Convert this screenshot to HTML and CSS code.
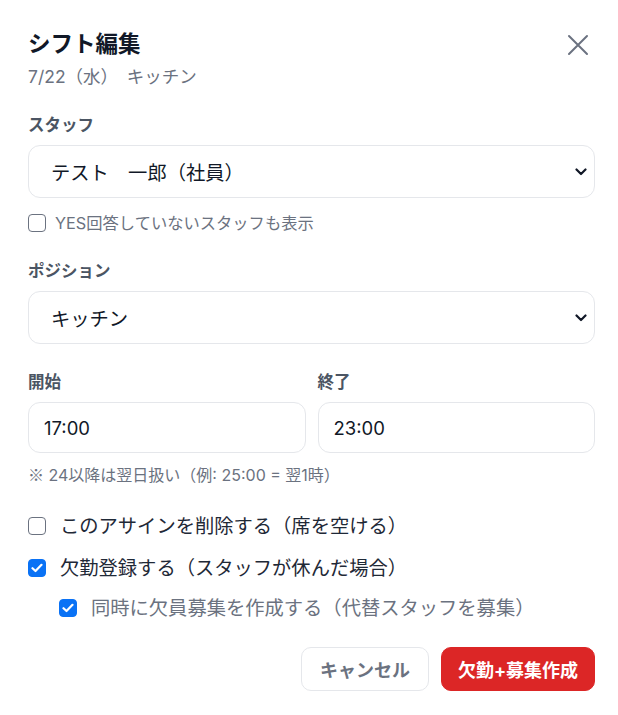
FILE: index.html
```html
<!DOCTYPE html>
<html lang="ja">
<head>
<meta charset="utf-8">
<title>シフト編集</title>
<link rel="stylesheet" href="styles.css">
</head>
<body>
<div class="modal">
  <div class="header">
    <div class="titles">
      <h1 class="title">シフト編集</h1>
      <div class="subtitle">7/22（水）　キッチン</div>
    </div>
    <button class="close" aria-label="閉じる">
      <svg width="22" height="22" viewBox="0 0 22 22"><path d="M2 2 L20 20 M20 2 L2 20" stroke="#6b7280" stroke-width="2" stroke-linecap="round" fill="none"/></svg>
    </button>
  </div>

  <div class="field first">
    <div class="label">スタッフ</div>
    <div class="select">
      <span>テスト　一郎（社員）</span>
      <svg class="chev" width="12" height="8" viewBox="0 0 12 8"><path d="M1.5 1.5 L6 6 L10.5 1.5" stroke="#111827" stroke-width="2.2" fill="none" stroke-linecap="round" stroke-linejoin="round"/></svg>
    </div>
    <label class="check small"><span class="box"></span><span>YES回答していないスタッフも表示</span></label>
  </div>

  <div class="field">
    <div class="label">ポジション</div>
    <div class="select">
      <span>キッチン</span>
      <svg class="chev" width="12" height="8" viewBox="0 0 12 8"><path d="M1.5 1.5 L6 6 L10.5 1.5" stroke="#111827" stroke-width="2.2" fill="none" stroke-linecap="round" stroke-linejoin="round"/></svg>
    </div>
  </div>

  <div class="times">
    <div class="time">
      <div class="label">開始</div>
      <div class="input">17:00</div>
    </div>
    <div class="time">
      <div class="label">終了</div>
      <div class="input">23:00</div>
    </div>
  </div>
  <div class="note"><span class="cjk">※</span> 24以降は翌日扱い（例: 25:00 = 翌1時）</div>

  <div class="options">
    <label class="check"><span class="box"></span><span>このアサインを削除する（席を空ける）</span></label>
    <label class="check"><span class="box on"><svg width="12" height="10" viewBox="0 0 12 10"><path d="M1.5 5.2 L4.5 8 L10.5 1.8" stroke="#fff" stroke-width="2.2" fill="none" stroke-linecap="round" stroke-linejoin="round"/></svg></span><span>欠勤登録する（スタッフが休んだ場合）</span></label>
    <label class="check sub"><span class="box on"><svg width="12" height="10" viewBox="0 0 12 10"><path d="M1.5 5.2 L4.5 8 L10.5 1.8" stroke="#fff" stroke-width="2.2" fill="none" stroke-linecap="round" stroke-linejoin="round"/></svg></span><span>同時に欠員募集を作成する（代替スタッフを募集）</span></label>
  </div>

  <div class="actions">
    <button class="btn cancel">キャンセル</button>
    <button class="btn primary">欠勤+募集作成</button>
  </div>
</div>
</body>
</html>
```

FILE: styles.css
```css
* { box-sizing: border-box; }
html, body { margin: 0; background: #fff; }
body {
  font-family: Inter, "Noto Sans CJK JP", sans-serif;
  color: #111827;
}
.cjk { font-family: "Noto Sans CJK JP", sans-serif; }
.modal {
  padding: 29px 23px 24px 28px;
}
.header {
  display: flex;
  justify-content: space-between;
  align-items: flex-start;
}
.title {
  margin: 0;
  font-size: 22.5px;
  line-height: 30px;
  font-weight: 700;
  color: #111827;
}
.subtitle {
  margin-top: 6px;
  font-size: 17.5px;
  line-height: 24px;
  color: #6b7280;
}
.close {
  border: 0;
  background: none;
  padding: 0;
  margin-top: 5px;
  margin-right: 6px;
  width: 22px;
  height: 22px;
  display: flex;
}
.field { margin-top: 25px; }
.label {
  font-size: 16.5px;
  line-height: 22px;
  font-weight: 700;
  color: #4b5563;
  margin-bottom: 9px;
}
.select, .input {
  border: 1px solid #e5e7eb;
  border-radius: 12px;
  display: flex;
  align-items: center;
  font-size: 19.3px;
  color: #111827;
}
.select {
  height: 53px;
  padding: 0 7px 0 22px;
  justify-content: space-between;
}
.input {
  height: 51px;
  padding: 0 15px;
  font-size: 18.5px;
}
.check {
  display: flex;
  align-items: center;
  gap: 14px;
  font-size: 19.3px;
  line-height: 26px;
  color: #1f2937;
}
.check .box {
  width: 18px;
  height: 18px;
  border: 1.5px solid #6b7280;
  border-radius: 4px;
  display: flex;
  align-items: center;
  justify-content: center;
  flex: none;
}
.check .box.on {
  background: #0a72f5;
  border-color: #0a72f5;
}
.check.small {
  margin-top: 13px;
  font-size: 16.3px;
  line-height: 24px;
  gap: 9px;
  color: #6b7280;
}
.times {
  margin-top: 27px;
  display: grid;
  grid-template-columns: 1fr 1fr;
  gap: 12px;
}
.note {
  margin-top: 10px;
  font-size: 16px;
  line-height: 22px;
  color: #6b7280;
}
.options {
  margin-top: 27px;
  display: flex;
  flex-direction: column;
  gap: 16px;
}
.check.sub {
  padding-left: 31px;
  color: #6b7280;
  margin-top: -2px;
}
.actions {
  margin-top: 26px;
  display: flex;
  justify-content: flex-end;
  gap: 12px;
}
.btn {
  font-family: inherit;
  height: 44px;
  border-radius: 10px;
  font-size: 18px;
  font-weight: 700;
  padding: 0;
  cursor: pointer;
}
.cancel {
  width: 128px;
  background: #fff;
  border: 1px solid #e5e7eb;
  color: #6b7280;
}
.primary {
  width: 154px;
  background: #dc2626;
  border: 1px solid #dc2626;
  color: #fff;
}
```
